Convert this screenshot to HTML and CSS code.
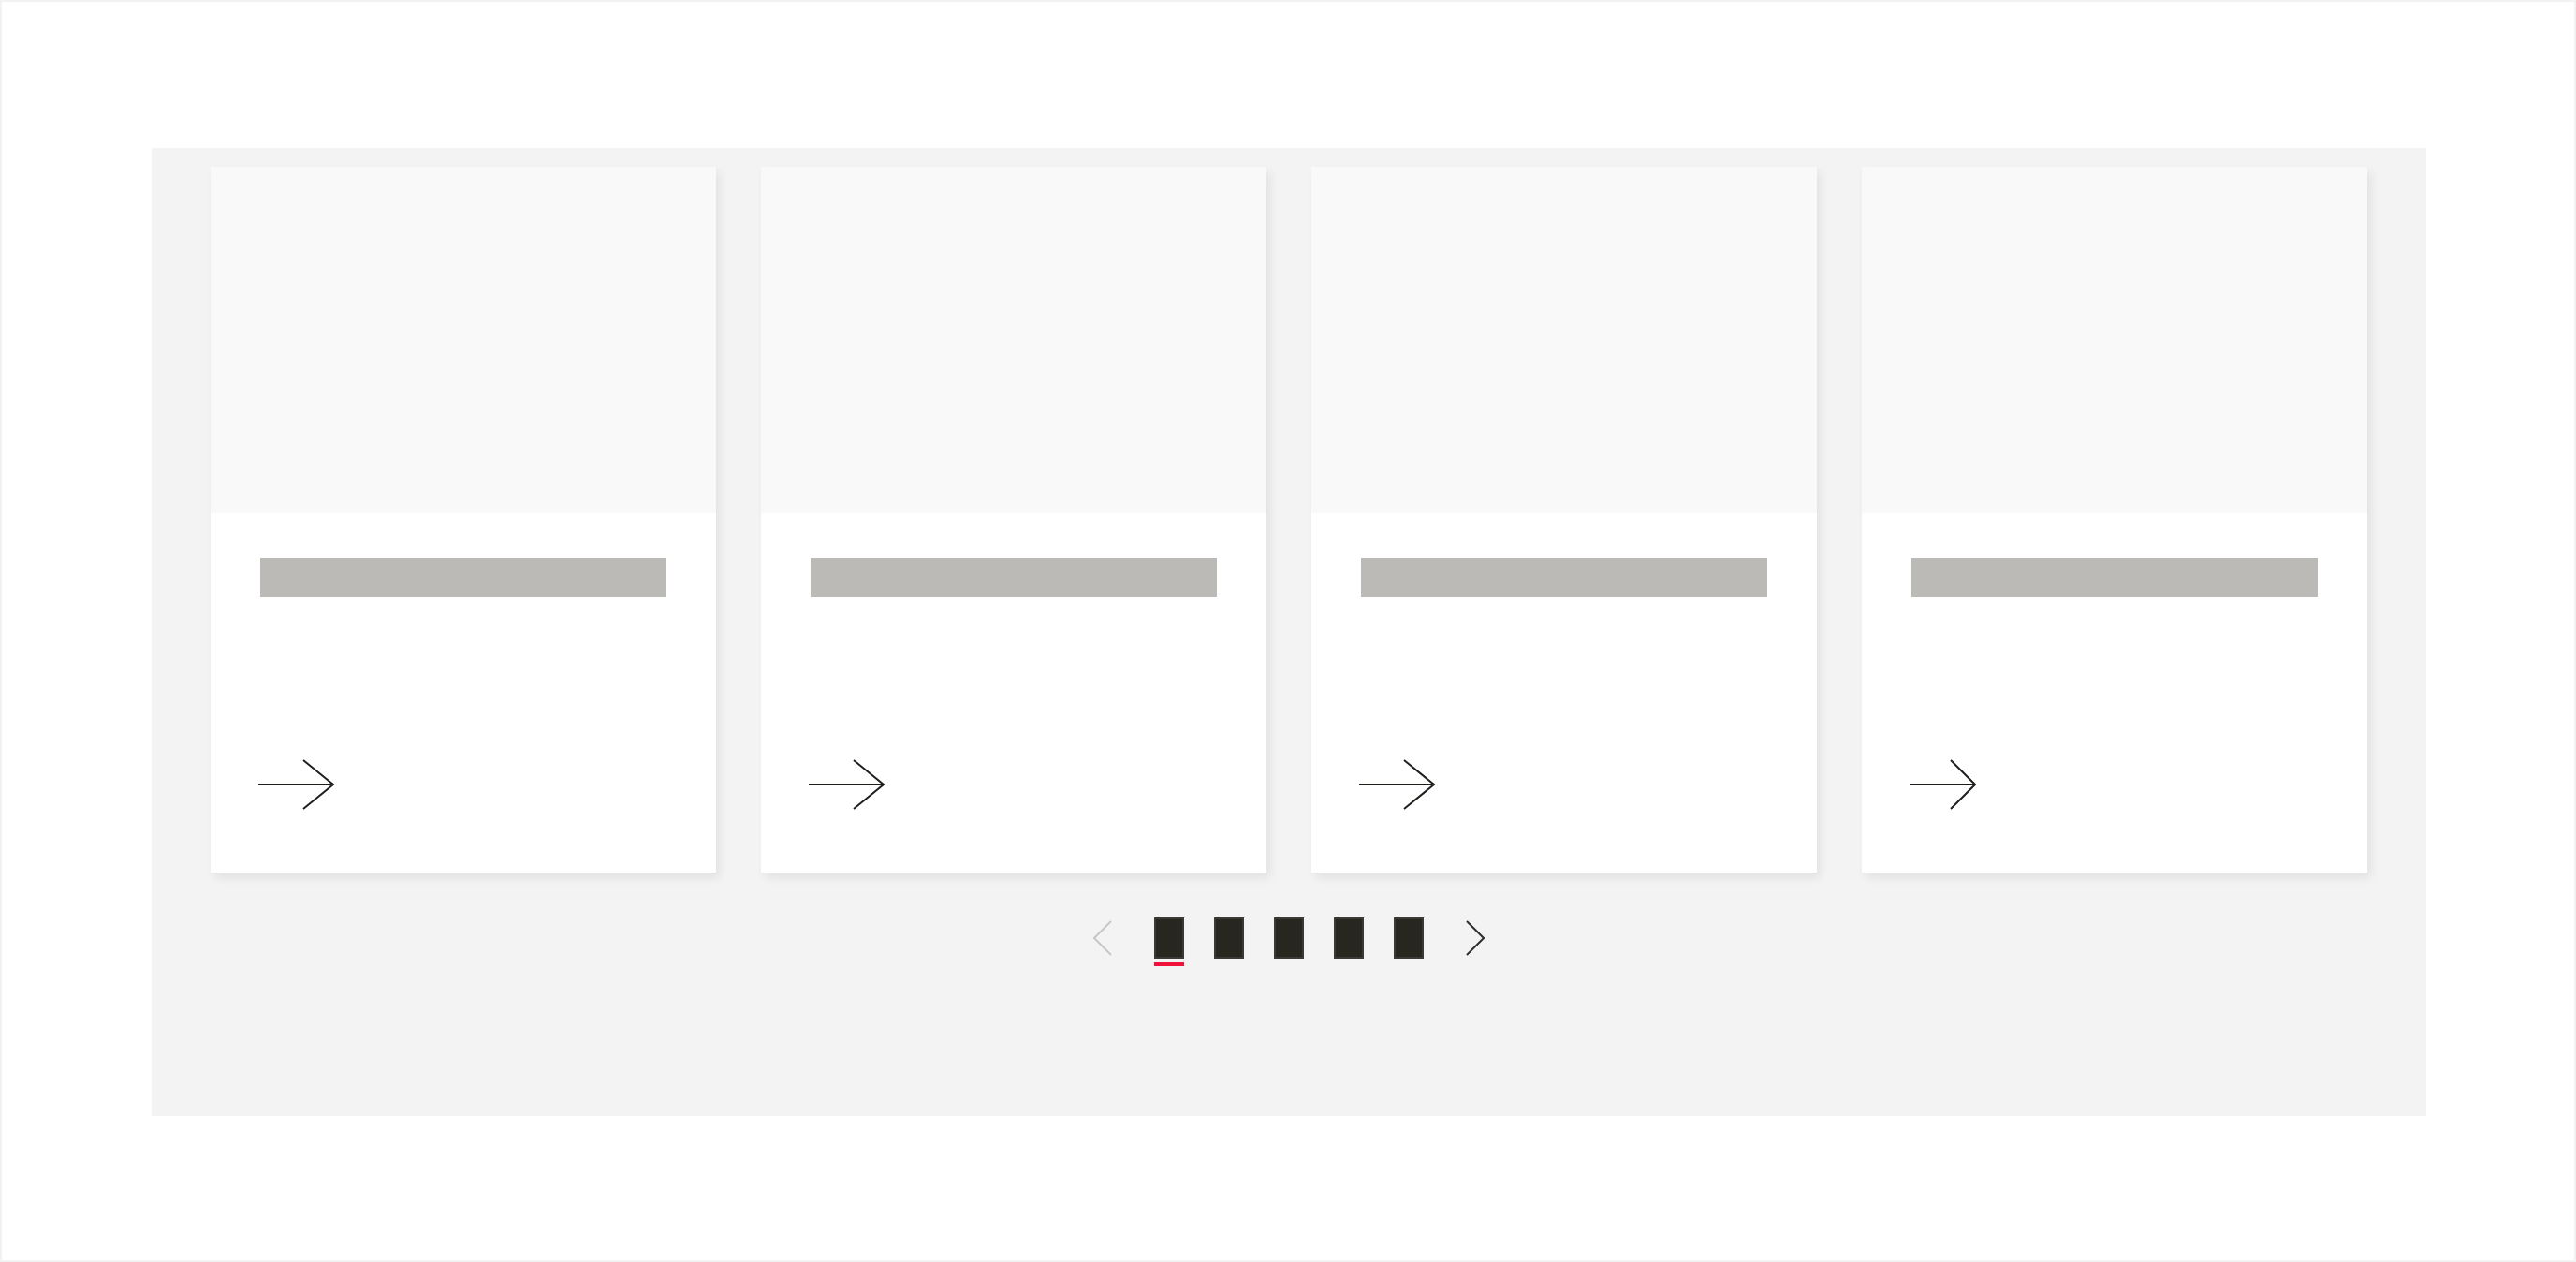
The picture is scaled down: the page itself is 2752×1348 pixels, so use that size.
FILE: index.html
```html
<!DOCTYPE html>
<html lang="en">
<head>
<meta charset="utf-8">
<title>Card carousel</title>
<link rel="stylesheet" href="styles.css">
</head>
<body>
<div class="frame">
  <section class="carousel">
    <div class="cards">
      <article class="card">
        <div class="card-media"></div>
        <div class="card-body">
          <div class="card-title"></div>
          <a class="card-link" href="#" aria-label="Open">
            <svg width="82" height="54" viewBox="0 0 82 54"><path d="M1 27H81M49 1L81 27L49 53" fill="none" stroke="#1f1f1c" stroke-width="2"/></svg>
          </a>
        </div>
      </article>
      <article class="card">
        <div class="card-media"></div>
        <div class="card-body">
          <div class="card-title"></div>
          <a class="card-link" href="#" aria-label="Open">
            <svg width="82" height="54" viewBox="0 0 82 54"><path d="M1 27H81M49 1L81 27L49 53" fill="none" stroke="#1f1f1c" stroke-width="2"/></svg>
          </a>
        </div>
      </article>
      <article class="card">
        <div class="card-media"></div>
        <div class="card-body">
          <div class="card-title"></div>
          <a class="card-link" href="#" aria-label="Open">
            <svg width="82" height="54" viewBox="0 0 82 54"><path d="M1 27H81M49 1L81 27L49 53" fill="none" stroke="#1f1f1c" stroke-width="2"/></svg>
          </a>
        </div>
      </article>
      <article class="card">
        <div class="card-media"></div>
        <div class="card-body">
          <div class="card-title"></div>
          <a class="card-link" href="#" aria-label="Open">
            <svg width="72" height="54" viewBox="0 0 72 54"><path d="M1 27H71M45 1L71 27L45 53" fill="none" stroke="#1f1f1c" stroke-width="2"/></svg>
          </a>
        </div>
      </article>
    </div>

    <nav class="pager" aria-label="Slides">
      <button class="pager-arrow" aria-label="Previous">
        <svg width="20" height="38" viewBox="0 0 20 38"><path d="M19 1L1 19L19 37" fill="none" stroke="#c6c6c6" stroke-width="2"/></svg>
      </button>
      <div class="dots">
        <span class="dot is-active"><span class="dot-box"></span><span class="dot-line"></span></span>
        <span class="dot"><span class="dot-box"></span><span class="dot-line"></span></span>
        <span class="dot"><span class="dot-box"></span><span class="dot-line"></span></span>
        <span class="dot"><span class="dot-box"></span><span class="dot-line"></span></span>
        <span class="dot"><span class="dot-box"></span><span class="dot-line"></span></span>
      </div>
      <button class="pager-arrow" aria-label="Next">
        <svg width="20" height="38" viewBox="0 0 20 38"><path d="M1 1L19 19L1 37" fill="none" stroke="#2e2e2b" stroke-width="2"/></svg>
      </button>
    </nav>
  </section>
</div>
</body>
</html>
```

FILE: styles.css
```css
html, body {
  margin: 0;
  padding: 0;
  background: #ffffff;
  font-family: "Liberation Sans", Arial, sans-serif;
}

.frame {
  width: 2752px;
  height: 1348px;
  box-sizing: border-box;
  border: 2px solid #f2f2f2;
  padding: 156px 0 0 160px;
}

.carousel {
  width: 2430px;
  height: 1034px;
  box-sizing: border-box;
  background: #f3f3f3;
  padding: 20px 63px 0;
}

.cards {
  display: grid;
  grid-template-columns: repeat(4, 540px);
  gap: 48px;
}

.card {
  height: 754px;
  background: #ffffff;
  display: flex;
  flex-direction: column;
  box-shadow: 4px 6px 10px rgba(0, 0, 0, 0.07);
}

.card-media {
  height: 370px;
  background: #f9f9f9;
}

.card-body {
  padding: 48px 53px 0;
  display: flex;
  flex-direction: column;
}

.card-title {
  height: 42px;
  background: #bbbab6;
}

.card-link {
  display: block;
  align-self: flex-start;
  margin: 173px 0 0 -3px;
  line-height: 0;
}

.card-link svg {
  display: block;
}

.pager {
  display: flex;
  justify-content: center;
  align-items: flex-start;
  gap: 45px;
  margin-top: 48px;
}

.pager-arrow {
  width: 20px;
  height: 44px;
  padding: 0;
  border: 0;
  background: transparent;
  display: flex;
  align-items: center;
  justify-content: center;
  cursor: pointer;
}

.pager-arrow svg {
  display: block;
}

.dots {
  display: flex;
  gap: 32px;
}

.dot {
  display: flex;
  flex-direction: column;
  gap: 4px;
  width: 32px;
}

.dot-box {
  height: 44px;
  box-sizing: border-box;
  background: #28271f;
  border: 2px solid #3a3935;
}

.dot-line {
  height: 4px;
}

.dot.is-active .dot-line {
  background: #f0103a;
}
```
